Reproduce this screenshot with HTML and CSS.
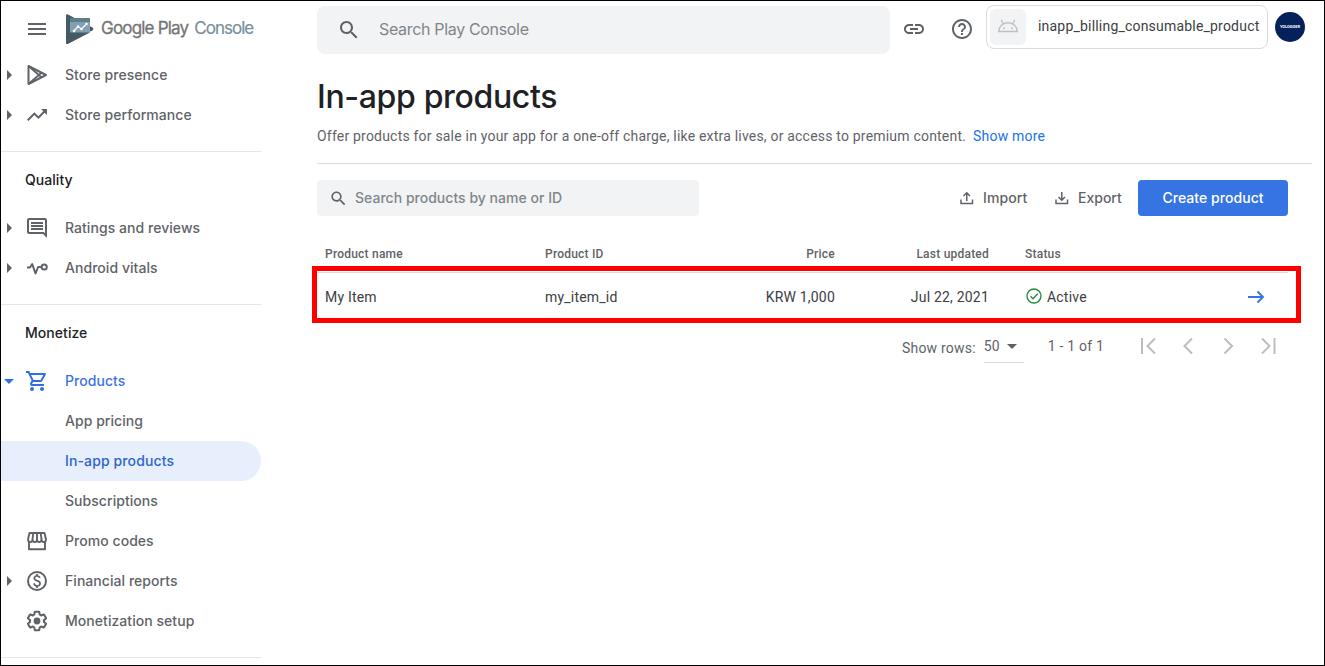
FILE: index.html
```html
<!DOCTYPE html>
<html lang="en">
<head>
<meta charset="utf-8">
<title>In-app products</title>
<link rel="stylesheet" href="styles.css">
</head>
<body>
<div class="frame">
  <aside class="sidebar">
    <div class="brand">
      <svg class="icon menu" viewBox="0 0 24 24"><path d="M3 18h18v-2H3v2zm0-5h18v-2H3v2zm0-7v2h18V6H3z"/></svg>
      <svg class="logo" viewBox="0 0 28 30">
        <path d="M0 1.500Q0 0 1.500.2L26.500 13.600Q28 15 26.500 16.300L2 29.800Q0 30.500 0 28.500z" fill="#455a64"/>
        <path d="M4 4h20v14.500L4 21.500z" fill="#82a0b1"/>
        <path d="M4 4h20v4H4z" fill="#607d8b"/>
        <path d="M0 22l4-3.500h20L2 29.800Q0 30.500 0 28.500z" fill="#455a64"/>
        <path d="M8 17l4-4.500 3.500 2.500 5-5" fill="none" stroke="#fff" stroke-width="1.200"/>
        <g fill="#fff"><circle cx="8" cy="17" r="1.300"/><circle cx="12" cy="12.500" r="1.300"/><circle cx="15.500" cy="15" r="1.300"/><circle cx="20.500" cy="10" r="1.300"/></g>
      </svg>
      <div class="wordmark"><span class="w-play">Google Play</span><span class="w-console">Console</span></div>
    </div>
    <nav>
      <section class="group">
        <a class="item"><i class="caret"></i>
          <svg class="icon" viewBox="0 0 24 24"><g fill="none" stroke="#5f6368" stroke-width="2" stroke-linejoin="round"><path d="M3.500 3v18L21 12z"/><path d="M4 3.500L16.500 14.200M4 20.500L16.500 9.800" stroke-width="1.800"/></g></svg>
          <span>Store presence</span></a>
        <a class="item"><i class="caret"></i>
          <svg class="icon" viewBox="0 0 24 24"><path d="M16 6l2.290 2.290-4.880 4.880-4-4L2 16.590 3.410 18l6-6 4 4 6.300-6.290L22 12V6z"/></svg>
          <span>Store performance</span></a>
      </section>
      <section class="group">
        <h2>Quality</h2>
        <a class="item"><i class="caret"></i>
          <svg class="icon" viewBox="0 0 24 24"><path d="M21.990 4c0-1.100-.890-2-1.990-2H4c-1.100 0-2 .9-2 2v12c0 1.100.9 2 2 2h14l4 4-.010-18zM20 4v13.170L18.830 16H4V4h16zM6 12h12v2H6zm0-3h12v2H6zm0-3h12v2H6z"/></svg>
          <span>Ratings and reviews</span></a>
        <a class="item"><i class="caret"></i>
          <svg class="icon" viewBox="0 0 24 24"><g fill="none" stroke="#5f6368" stroke-width="2" stroke-linejoin="round"><path d="M2 11.500h3l2.200-3.500 3.300 9.500 2.600-6.500h3"/><circle cx="19.200" cy="11" r="2.600"/></g></svg>
          <span>Android vitals</span></a>
      </section>
      <section class="group">
        <h2>Monetize</h2>
        <a class="item open"><i class="caret"></i>
          <svg class="icon" viewBox="0 0 24 24"><path d="M15.550 13c.750 0 1.410-.410 1.750-1.030l3.580-6.490c.370-.660-.110-1.480-.870-1.480H5.210l-.940-2H1v2h2l3.600 7.590-1.350 2.440C4.520 15.370 5.480 17 7 17h12v-2H7l1.100-2h7.450zM6.160 6h12.150l-2.760 5H8.530L6.160 6z"/><circle cx="7" cy="20" r="2"/><circle cx="17" cy="20" r="2"/></svg>
          <span>Products</span></a>
        <a class="item sub"><span>App pricing</span></a>
        <a class="item sub active"><span>In-app products</span></a>
        <a class="item sub"><span>Subscriptions</span></a>
        <a class="item flat">
          <svg class="icon" viewBox="0 0 24 24"><g fill="none" stroke="#5f6368" stroke-width="1.900" stroke-linejoin="round"><path d="M4 12v8.200h16V12"/><path d="M4.500 4h15l1.500 6.500c0 2-1.200 2.500-2.300 2.500s-2.200-.8-2.200-2.500c0 1.700-1.200 2.500-2.250 2.500S12 12.200 12 10.500c0 1.700-1.200 2.500-2.250 2.500S7.500 12.200 7.500 10.500C7.500 12.200 6.400 13 5.300 13S3 12.500 3 10.500z"/><path d="M12 4v6.500M8.300 4l-.8 6.500M15.700 4l.8 6.500"/></g></svg>
          <span>Promo codes</span></a>
        <a class="item"><i class="caret"></i>
          <svg class="icon" viewBox="0 0 24 24"><circle cx="12" cy="12" r="9" fill="none" stroke="#5f6368" stroke-width="2"/><path d="M12.890 11.100c-1.780-.590-2.640-.960-2.640-1.900 0-1.020 1.110-1.390 1.810-1.390 1.310 0 1.790.990 1.900 1.340l1.580-.670c-.150-.440-.820-1.910-2.660-2.230V5h-1.750v1.260c-2.600.560-2.620 2.850-2.620 2.960 0 2.270 2.250 2.910 3.350 3.310 1.580.560 2.280 1.070 2.280 2.030 0 1.130-1.050 1.610-1.980 1.610-1.820 0-2.340-1.870-2.400-2.090l-1.660.670c.630 2.190 2.280 2.780 3.020 2.960V19h1.750v-1.240c.520-.090 3.020-.590 3.020-3.220.010-1.390-.600-2.610-3-3.440z"/></svg>
          <span>Financial reports</span></a>
        <a class="item flat">
          <svg class="icon" viewBox="0 0 24 24"><path d="M19.430 12.980c.040-.320.070-.640.070-.980s-.030-.660-.070-.980l2.110-1.650c.190-.150.240-.420.120-.640l-2-3.460c-.090-.160-.260-.250-.440-.250-.060 0-.120.010-.170.030l-2.490 1c-.520-.400-1.080-.730-1.690-.980l-.380-2.650C14.460 2.180 14.250 2 14 2h-4c-.250 0-.460.180-.490.420l-.380 2.650c-.610.250-1.170.590-1.690.980l-2.490-1c-.060-.020-.120-.030-.180-.030-.170 0-.340.090-.430.250l-2 3.460c-.130.220-.070.490.120.640l2.110 1.650c-.040.320-.070.650-.070.980s.030.660.070.980l-2.110 1.650c-.190.150-.240.420-.120.640l2 3.460c.090.160.260.250.440.250.060 0 .120-.010.170-.030l2.490-1c.520.400 1.080.730 1.690.980l.380 2.650c.030.240.240.420.490.420h4c.250 0 .460-.180.490-.420l.380-2.650c.610-.250 1.170-.590 1.690-.980l2.490 1c.060.020.120.030.180.030.170 0 .340-.090.430-.250l2-3.460c.120-.220.070-.490-.120-.640l-2.110-1.650z" fill="none" stroke="#5f6368" stroke-width="2.200" stroke-linejoin="round" transform="translate(.84 .84) scale(.93)"/><circle cx="12" cy="12" r="3.400"/></svg>
          <span>Monetization setup</span></a>
      </section>
    </nav>
  </aside>

  <main class="main">
    <header class="topbar">
      <div class="search-top">
        <svg class="icon" viewBox="0 0 24 24"><path d="M15.500 14h-.790l-.280-.270C15.410 12.590 16 11.110 16 9.500 16 5.910 13.090 3 9.500 3S3 5.910 3 9.500 5.910 16 9.500 16c1.610 0 3.090-.590 4.230-1.570l.270.280v.790l5 4.990L20.490 19l-4.990-5zm-6 0C7.010 14 5 11.990 5 9.500S7.010 5 9.500 5 14 7.010 14 9.500 11.990 14 9.500 14z"/></svg>
        <span>Search Play Console</span>
      </div>
      <svg class="icon link" viewBox="0 0 24 24"><path d="M3.900 12c0-1.710 1.390-3.100 3.100-3.100h4V7H7c-2.760 0-5 2.240-5 5s2.240 5 5 5h4v-1.900H7c-1.710 0-3.100-1.390-3.100-3.100zM8 13h8v-2H8v2zm9-6h-4v1.900h4c1.710 0 3.100 1.390 3.100 3.100s-1.390 3.100-3.100 3.100h-4V17h4c2.760 0 5-2.240 5-5s-2.240-5-5-5z"/></svg>
      <svg class="icon help" viewBox="0 0 24 24"><path d="M11 18h2v-2h-2v2zm1-16C6.480 2 2 6.480 2 12s4.480 10 10 10 10-4.480 10-10S17.520 2 12 2zm0 18c-4.410 0-8-3.590-8-8s3.590-8 8-8 8 3.590 8 8-3.590 8-8 8zm0-14c-2.210 0-4 1.790-4 4h2c0-1.100.9-2 2-2s2 .9 2 2c0 2-3 1.750-3 5h2c0-2.250 3-2.500 3-5 0-2.210-1.790-4-4-4z"/></svg>
      <div class="app-chip">
        <div class="app-icon"><svg width="22" height="22" viewBox="0 0 22 22"><g fill="none" stroke="#bdc1c6" stroke-width="1.400"><path d="M1.700 15.500a9.300 8.700 0 0 1 18.600 0z"/><path d="M6.500 8.500L4.200 4M15.500 8.500L17.800 4"/></g><circle cx="7" cy="12.200" r="1" fill="#bdc1c6"/><circle cx="15" cy="12.200" r="1" fill="#bdc1c6"/></svg></div>
        <span class="app-name">inapp_billing_consumable_product</span>
      </div>
      <div class="avatar"><span>YOLOGGER</span></div>
    </header>

    <h1>In-app products</h1>
    <p class="intro"><span>Offer products for sale in your app for a one-off charge, like extra lives, or access to premium content.</span><a>Show more</a></p>

    <div class="toolbar">
      <div class="search-products">
        <svg class="icon small" viewBox="0 0 24 24"><path d="M15.500 14h-.790l-.280-.270C15.410 12.590 16 11.110 16 9.500 16 5.910 13.090 3 9.500 3S3 5.910 3 9.500 5.910 16 9.500 16c1.610 0 3.090-.590 4.230-1.570l.270.280v.790l5 4.990L20.490 19l-4.990-5zm-6 0C7.010 14 5 11.990 5 9.500S7.010 5 9.500 5 14 7.010 14 9.500 11.990 14 9.500 14z"/></svg>
        <span>Search products by name or ID</span>
      </div>
      <div class="action import"><svg viewBox="0 0 14 14"><path d="M1 8.500v4h11.500v-4M6.750 10V2M3.500 5l3.250-3.250L10 5"/></svg><span>Import</span></div>
      <div class="action export"><svg viewBox="0 0 14 14"><path d="M1 8.500v4h11.500v-4M6.750 1v8M3.500 6l3.250 3.250L10 6"/></svg><span>Export</span></div>
      <button class="create"><span>Create product</span></button>
    </div>

    <div class="table">
      <div class="row head">
        <span>Product name</span><span>Product ID</span><span class="num">Price</span><span class="num">Last updated</span><span class="status">Status</span>
      </div>
      <div class="highlight">
        <div class="row body">
          <span>My Item</span><span>my_item_id</span><span class="num">KRW 1,000</span><span class="num">Jul 22, 2021</span>
          <span class="status"><svg class="check" viewBox="0 0 16 16"><g fill="none" stroke="#2b8a3e" stroke-width="1.400"><circle cx="8" cy="8" r="7"/><path d="M4.500 8.200l2.500 2.500 4.800-5"/></g></svg>Active</span>
          <svg class="arrow" viewBox="0 0 18 14"><path d="M1 7h15M10.500 1.500L16 7l-5.500 5.500" fill="none" stroke="#3574e2" stroke-width="1.900"/></svg>
        </div>
      </div>
    </div>

    <div class="pager">
      <span class="label">Show rows:</span>
      <div class="select"><span>50</span><i class="down"></i></div>
      <span class="range">1 - 1 of 1</span>
      <svg class="pages" viewBox="0 0 140 18"><g fill="none" stroke="#bdbdbd" stroke-width="2"><path d="M2 1v16M15 1.500L7.500 9l7.500 7.500M52 1.500L44.500 9l7.500 7.500M84.500 1.500L92 9l-7.500 7.500M122 1.500l7.500 7.500-7.500 7.500M134.500 1v16"/></g></svg>
    </div>
  </main>
</div>
</body>
</html>
```

FILE: styles.css
```css
* { box-sizing: border-box; }
body { margin: 0; background: #fff; }
.frame {
  width: 1325px; height: 666px; border: 1px solid #000; overflow: hidden;
  display: flex; background: #fff; color: #5f6368;
  font: 14px/20px Roboto, "Liberation Sans", sans-serif;
}
span, a { white-space: nowrap; }
.icon { width: 24px; height: 24px; fill: #5f6368; flex: none; display: block; }

.sidebar { width: 260px; flex: none; font-family: Inter, "Open Sans", sans-serif; font-weight: 500; letter-spacing: .05px; }
.brand { height: 54px; display: flex; align-items: center; padding-left: 24px; }
.menu { margin-top: 2px; }
.logo { width: 28px; height: 30px; margin: 1px 0 0 17px; flex: none; }
.wordmark { margin-left: 7px; display: flex; gap: 6px; font-weight: 400; font-size: 17px; line-height: 24px; }
.w-play { color: #757575; letter-spacing: -.8px; -webkit-text-stroke: .3px #757575; }
.w-console { color: #78909c; letter-spacing: -1px; -webkit-text-stroke: .2px #78909c; }
.group { padding-bottom: 16px; border-bottom: 1px solid #e4e6e8; }
.group h2 { margin: 0; height: 56px; padding: 18px 0 0 24px; font-size: 14px; line-height: 20px; font-weight: 500; color: #202124; }
.item { height: 40px; display: flex; align-items: center; }
.item .icon { margin-right: 16px; }
.caret { width: 5px; margin: 0 13px 0 6px; border-left: 5px solid #5f6368; border-top: 5px solid transparent; border-bottom: 5px solid transparent; flex: none; }
.open { color: #3b74dd; }
.open .icon { fill: #2f6fe0; }
.open .caret { width: 10px; margin: 0 11px 0 3px; border-top: 5px solid #2f6fe0; border-left: 5px solid transparent; border-right: 5px solid transparent; border-bottom: 0; }
.flat { padding-left: 24px; }
.sub { padding-left: 64px; }
.active { background: #e8effc; color: #2c65cd; border-radius: 0 20px 20px 0; letter-spacing: .12px; }

.main { flex: 1; padding-left: 56px; }
.topbar { height: 54px; display: flex; }
.search-top { width: 573px; height: 48px; margin-top: 5px; padding-left: 20px; border-radius: 8px; background: #f1f3f4; display: flex; align-items: center; color: #80868b; font: 16px/24px Inter, sans-serif; letter-spacing: -.33px; }
.search-top span { padding-bottom: 2px; }
.search-top .icon { margin-right: 18px; }
.link { margin: 16px 0 0 12px; }
.help { margin: 16px 0 0 24px; }
.app-chip { width: 282px; height: 44px; margin: 4px 0 0 12px; border: 1px solid #dadce0; border-radius: 8px; display: flex; align-items: center; color: #3c4043; padding-left: 3px; }
.app-name { letter-spacing: .2px; padding-bottom: 2px; }
.app-icon { width: 36px; height: 36px; border-radius: 6px; background: #f1f3f4; margin-right: 12px; display: flex; align-items: center; justify-content: center; }
.avatar { width: 30px; height: 30px; margin: 11px 0 0 7px; border-radius: 50%; background: #06205c; color: #fff; display: flex; align-items: center; justify-content: center; font: 700 4px/6px Roboto, sans-serif; }
h1 { margin: 22px 0 0; height: 40px; font: 500 32px/40px Inter, sans-serif; letter-spacing: -.34px; color: #202124; }
.intro { width: 995px; height: 47px; margin: 0; padding-top: 9px; border-bottom: 1px solid #dadce0; letter-spacing: .2px; }
.intro a { color: #1a73e8; margin-left: 7px; }

.toolbar { display: flex; align-items: center; margin-top: 16px; width: 971px; font-family: Inter, sans-serif; font-weight: 500; }
.search-products { width: 382px; height: 36px; padding-left: 12px; background: #f1f3f4; border-radius: 4px; display: flex; align-items: center; color: #80868b; letter-spacing: .02px; }
.small { width: 19px; height: 19px; margin-right: 7px; }
.action { display: flex; align-items: center; letter-spacing: .1px; }
.action svg { width: 14px; height: 14px; fill: none; stroke: #5f6368; stroke-width: 1.5; margin-right: 9px; }
.import { margin-left: 261px; width: 95px; }
.export { width: 83px; letter-spacing: 0; }
.create { width: 150px; height: 36px; padding: 0; border: 0; border-radius: 4px; background: #3574e2; color: #fff; font: inherit; letter-spacing: .05px; }

.table { width: 971px; }
.row { display: grid; grid-template-columns: 220px 178px 112px 154px 227px 1fr; align-items: center; }
.num { text-align: right; }
.head { height: 50px; padding: 26px 0 0 8px; align-items: start; font-size: 12px; line-height: 24px; font-weight: 500; letter-spacing: .22px; color: #5f6368; }
.head .status { padding-left: 36px; }
.highlight { width: 989px; height: 57px; margin-left: -5px; border: 5px solid #f00; padding-top: 1px; }
.body { width: 971px; height: 46px; padding: 2px 0 0 8px; border-top: 1px solid #dadce0; color: #3c4043; letter-spacing: .2px; }
.body .status { display: flex; align-items: center; padding-left: 37px; }
.check { width: 16px; height: 16px; margin: 0 5px 2px 0; }
.arrow { width: 18px; height: 14px; margin-left: 31px; }

.pager { display: flex; align-items: flex-start; margin-top: 5px; letter-spacing: .2px; }
.label { margin: 10px 8px 0 585px; }
.select { width: 40px; height: 35px; border-bottom: 1px solid #dadce0; padding-top: 8px; display: flex; justify-content: space-between; }
.down { width: 10px; height: 0; margin: 8px 7px 0 0; border-top: 5px solid #5f6368; border-left: 5px solid transparent; border-right: 5px solid transparent; }
.range { margin: 8px 0 0 24px; width: 92px; }
.pages { width: 140px; height: 18px; margin-top: 9px; }
```
